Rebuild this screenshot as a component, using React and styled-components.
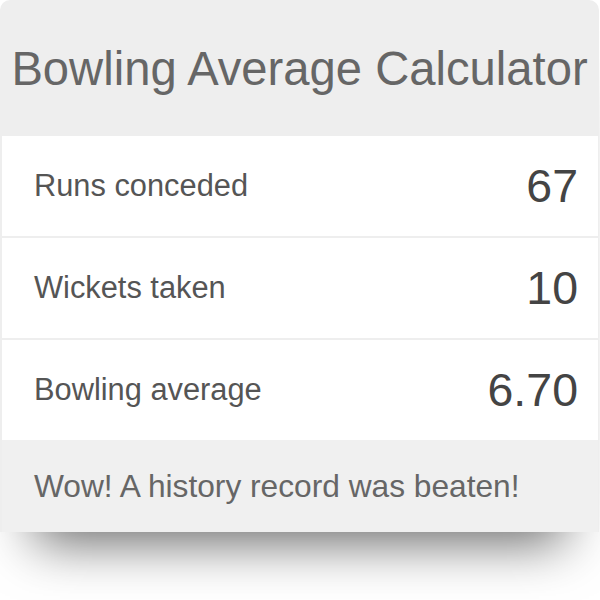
import React from 'react';
import styled, { createGlobalStyle } from 'styled-components';

const GlobalStyle = createGlobalStyle`
  html, body {
    margin: 0;
    padding: 0;
    background: #ffffff;
  }
`;

const Page = styled.div`
  width: 600px;
  height: 600px;
  overflow: hidden;
  font-family: "Liberation Sans", Arimo, Helvetica, Arial, sans-serif;
`;

const Card = styled.section`
  width: 599px;
  display: flex;
  flex-direction: column;
  background-color: #eeeeee;
  border-radius: 10px 10px 0 0;
  box-shadow: 0 45px 50px -35px rgba(0, 0, 0, 0.6);
`;

const Header = styled.header`
  height: 136px;
  display: flex;
  align-items: center;
  justify-content: center;
`;

const Title = styled.h1`
  margin: 0;
  font-family: inherit;
  font-size: 47.2px;
  font-weight: 400;
  color: #666666;
  white-space: nowrap;
`;

const Body = styled.div`
  display: flex;
  flex-direction: column;
  gap: 2px;
  padding: 0 1px 0 2px;
`;

const Row = styled.div`
  height: 100px;
  display: flex;
  align-items: center;
  justify-content: space-between;
  padding: 0 20px 0 32px;
  background-color: #ffffff;
`;

const Label = styled.span`
  font-size: 30.8px;
  color: #555555;
`;

const Value = styled.span`
  font-size: 46.5px;
  color: #444444;
`;

const Footer = styled.footer`
  height: 92px;
  margin: 0 1px 0 2px;
  display: flex;
  align-items: center;
  padding: 0 32px;
  background-color: #f0f0f0;
`;

const Message = styled.p`
  margin: 0;
  font-size: 31.7px;
  color: #666666;
`;

const rows = [
  { id: 'runs', label: 'Runs conceded', value: '67' },
  { id: 'wickets', label: 'Wickets taken', value: '10' },
  { id: 'average', label: 'Bowling average', value: '6.70' },
];

export default function App() {
  return (
    <Page>
      <GlobalStyle />
      <Card>
        <Header>
          <Title>Bowling Average Calculator</Title>
        </Header>

        <Body>
          {rows.map(({ id, label, value }) => (
            <Row key={id}>
              <Label>{label}</Label>
              <Value>{value}</Value>
            </Row>
          ))}
        </Body>

        <Footer>
          <Message>Wow! A history record was beaten!</Message>
        </Footer>
      </Card>
    </Page>
  );
}
